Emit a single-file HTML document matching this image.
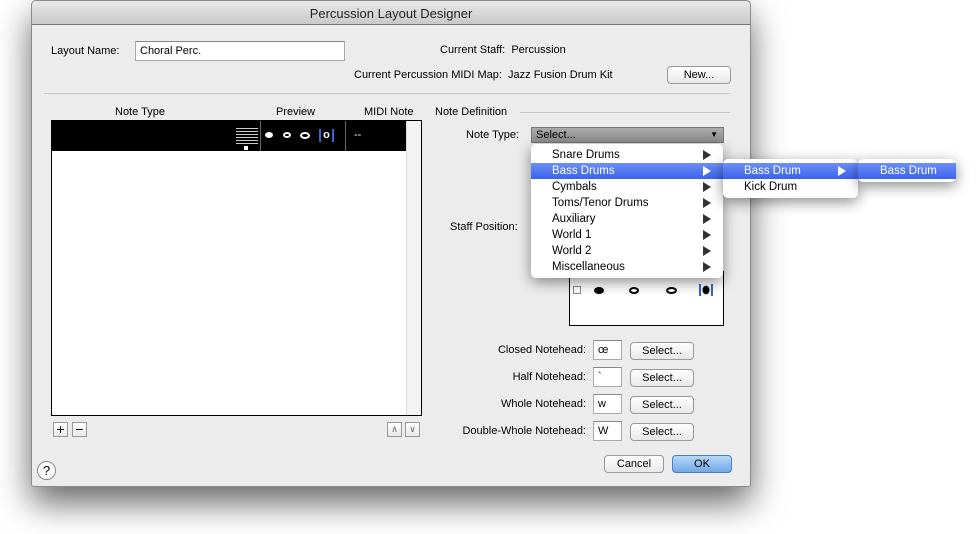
<!DOCTYPE html>
<html><head><style>
*{margin:0;padding:0;box-sizing:border-box}
body{width:978px;height:534px;background:#fff;position:relative;overflow:hidden;font-family:"Liberation Sans",sans-serif;font-size:11px;color:#000}
.a{position:absolute;white-space:nowrap}
.win{position:absolute;left:31px;top:0;width:720px;height:487px;background:#ececec;border:1px solid #8a8a8a;border-radius:5px 5px 3px 3px;box-shadow:0 16px 34px rgba(0,0,0,.6)}
.tb{position:absolute;left:0;top:0;width:718px;height:24px;background:linear-gradient(#e9e9e9,#c9c9c9);border-bottom:1px solid #777;border-radius:5px 5px 0 0;text-align:center;line-height:25px;font-size:13px;color:#222}
.btn{position:absolute;height:18px;border:1px solid #999;border-radius:4px;background:linear-gradient(#fff,#e8e8e8);text-align:center;line-height:16px;font-size:11px}
.fld{position:absolute;background:#fff;border:1px solid #aaa;border-top-color:#888;height:20px;line-height:18px;padding-left:4px}
.r{text-align:right}
.menu{position:absolute;background:#fff;border-radius:5px;box-shadow:0 4px 14px rgba(0,0,0,.45);font-size:11.5px}
.mi{position:absolute;left:0;right:0;height:16px;line-height:17px}
.hl{background:linear-gradient(#6c8ff6,#3a62ec);color:#fff}
.tri{position:absolute;right:12px;top:3px;width:0;height:0;border-left:8px solid #333;border-top:5px solid transparent;border-bottom:5px solid transparent}
.hl .tri{border-left-color:#fff}
</style></head><body>
<div class="win">
<div class="tb">Percussion Layout Designer</div>
<div class="a" style="left:19px;top:44px">Layout Name:</div>
<div class="fld" style="left:103px;top:40px;width:210px">Choral Perc.</div>
<div class="a" style="left:408px;top:43px">Current Staff:&nbsp; Percussion</div>
<div class="a" style="left:322px;top:68px">Current Percussion MIDI Map:&nbsp; Jazz Fusion Drum Kit</div>
<div class="btn" style="left:635px;top:65px;width:64px">New...</div>
<div class="a" style="left:12px;top:92px;width:686px;border-top:1px solid #c8c8c8"></div>
<div class="a" style="left:83px;top:105px">Note Type</div>
<div class="a" style="left:244px;top:105px">Preview</div>
<div class="a" style="left:332px;top:105px">MIDI Note</div>
<div class="a" style="left:19px;top:119px;width:371px;height:296px;background:#fff;border:1px solid #000"></div>
<div class="a" style="left:20px;top:120px;width:354px;height:30px;background:#000"></div>
<div class="a" style="left:374px;top:120px;width:15px;height:294px;background:#f4f4f4;border-left:1px solid #ddd"></div>
<div class="a" style="left:228px;top:120px;width:1px;height:30px;background:#666"></div>
<div class="a" style="left:313px;top:120px;width:1px;height:30px;background:#666"></div>
<div class="a" style="left:204px;top:127px;width:22px;height:17px;background:repeating-linear-gradient(#ccc 0 1px,transparent 1px 3px)"></div>
<div class="a" style="left:212px;top:145px;width:4px;height:4px;background:#fff"></div>
<div class="a" style="left:233px;top:131px;width:8px;height:6px;background:#fff;border-radius:50%"></div>
<div class="a" style="left:251px;top:131px;width:8px;height:6px;border:2px solid #fff;border-radius:50%"></div>
<div class="a" style="left:268px;top:131px;width:10px;height:7px;border:2px solid #fff;border-radius:50%"></div>
<div class="a" style="left:287px;top:128px;width:15px;height:13px;border-left:2px solid #36c;border-right:2px solid #36c;color:#fff;text-align:center;line-height:13px;font-weight:bold">o</div>
<div class="a" style="left:322px;top:128px;color:#fff">--</div>
<div class="btn" style="left:21px;top:421px;width:15px;height:15px;border-radius:0;line-height:13px;font-size:14px">+</div>
<div class="btn" style="left:40px;top:421px;width:15px;height:15px;border-radius:0;line-height:13px;font-size:14px">−</div>
<div class="btn" style="left:355px;top:421px;width:15px;height:15px;border-radius:0;font-size:9px;line-height:13px;color:#666">∧</div>
<div class="btn" style="left:373px;top:421px;width:15px;height:15px;border-radius:0;font-size:9px;line-height:13px;color:#666">∨</div>
<div class="a" style="left:403px;top:105px">Note Definition</div>
<div class="a" style="left:488px;top:111px;width:210px;border-top:1px solid #c8c8c8"></div>
<div class="a" style="left:434px;top:128px">Note Type:</div>
<div class="a" style="left:499px;top:126px;width:193px;height:16px;background:linear-gradient(#aaa,#8e8e8e);border:1px solid #777;padding-left:4px;line-height:14px">Select...<span style="position:absolute;right:5px;top:0;font-size:8px">▼</span></div>
<div class="a" style="left:418px;top:220px">Staff Position:</div>
<div class="a" style="left:537px;top:270px;width:155px;height:55px;background:#fff;border:1px solid #000"></div>
<div class="a" style="left:541px;top:285px;width:8px;height:8px;border:1px solid #888"></div>
<div class="a" style="left:562px;top:286px;width:10px;height:7px;background:#000;border-radius:50%"></div>
<div class="a" style="left:597px;top:286px;width:10px;height:7px;border:2px solid #000;border-radius:50%"></div>
<div class="a" style="left:634px;top:286px;width:11px;height:7px;border:2px solid #000;border-radius:50%"></div>
<div class="a" style="left:667px;top:283px;width:14px;height:12px;border-left:2px solid #36c;border-right:2px solid #36c;background:radial-gradient(#000 3px,transparent 4px)"></div>
<div class="a r" style="left:400px;top:343px;width:154px">Closed Notehead:</div>
<div class="a r" style="left:400px;top:370px;width:154px">Half Notehead:</div>
<div class="a r" style="left:400px;top:397px;width:154px">Whole Notehead:</div>
<div class="a r" style="left:400px;top:424px;width:154px">Double-Whole Notehead:</div>
<div class="fld" style="left:561px;top:339px;width:29px">œ</div>
<div class="fld" style="left:561px;top:366px;width:29px">`</div>
<div class="fld" style="left:561px;top:393px;width:29px">w</div>
<div class="fld" style="left:561px;top:420px;width:29px">W</div>
<div class="btn" style="left:598px;top:341px;width:64px">Select...</div>
<div class="btn" style="left:598px;top:368px;width:64px">Select...</div>
<div class="btn" style="left:598px;top:395px;width:64px">Select...</div>
<div class="btn" style="left:598px;top:422px;width:64px">Select...</div>
<div class="btn" style="left:572px;top:454px;width:60px">Cancel</div>
<div class="btn" style="left:640px;top:454px;width:60px;background:linear-gradient(#b9d7f6,#6fa8e8);border-color:#4a7cc0">OK</div>
<div class="a" style="left:5px;top:460px;width:19px;height:19px;border:1px solid #888;border-radius:50%;background:#fff;text-align:center;line-height:17px;font-size:13px">?</div>
</div>
<div class="menu" style="left:531px;top:144px;width:192px;height:134px">
<div class="mi" style="top:3px;padding-left:21px">Snare Drums<span class="tri"></span></div>
<div class="mi hl" style="top:19px;padding-left:21px">Bass Drums<span class="tri"></span></div>
<div class="mi" style="top:35px;padding-left:21px">Cymbals<span class="tri"></span></div>
<div class="mi" style="top:51px;padding-left:21px">Toms/Tenor Drums<span class="tri"></span></div>
<div class="mi" style="top:67px;padding-left:21px">Auxiliary<span class="tri"></span></div>
<div class="mi" style="top:83px;padding-left:21px">World 1<span class="tri"></span></div>
<div class="mi" style="top:99px;padding-left:21px">World 2<span class="tri"></span></div>
<div class="mi" style="top:115px;padding-left:21px">Miscellaneous<span class="tri"></span></div>
</div>
<div class="menu" style="left:723px;top:159px;width:135px;height:39px">
<div class="mi hl" style="top:4px;padding-left:21px">Bass Drum<span class="tri"></span></div>
<div class="mi" style="top:20px;padding-left:21px">Kick Drum</div>
</div>
<div class="menu" style="left:858px;top:159px;width:98px;height:23px">
<div class="mi hl" style="top:4px;padding-left:22px">Bass Drum</div>
</div>
</body></html>
